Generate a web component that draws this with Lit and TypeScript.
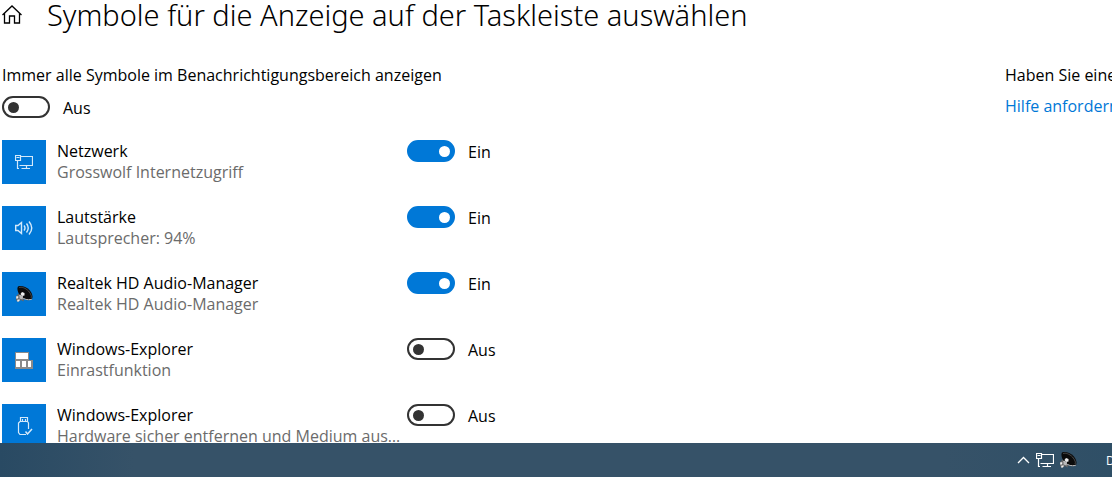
import { LitElement, html, svg, css } from "lit";
import { customElement, property, state } from "lit/decorators.js";

type IconName = "network" | "volume" | "speaker" | "keys" | "usb";

interface TrayItem {
  icon: IconName;
  name: string;
  detail: string;
  on: boolean;
}

const icons = {
  network: svg`
    <g fill="none" stroke="currentColor" stroke-width="1.2">
      <path d="M5.500 3.500H17.500V12.500H4.500M11.500 12.500V15.500M6.500 15.500H15"/>
      <path d="M.5 2.500H5.500V7.500H.5ZM1.500 4.500H4.500M2.500 7.500V15.500H4"/>
    </g>`,
  volume: svg`
    <g fill="none" stroke="currentColor" stroke-width="1.4">
      <path d="M.7 6.500H3L6.500 3.500V14.500L3 11.500H.7Z"/>
      <path d="M9 6.500Q11 9 9 11.500M11.500 4.500Q15 9 11.500 13.500M14 2.500Q19.500 9 14 15.500"/>
    </g>`,
  speaker: svg`
    <path d="M1 11.500L3.500 8.500L9 13.500L8.500 16.500L6 15L3 17L1 15Z" fill="#666"/>
    <path d="M3 1.500C6 .3 11 1.500 14.500 5C17.500 8.500 18.500 12.500 16.500 14.500C13 16.500 8 14.500 5 10.500C2.500 7 1.800 3.500 3 1.500Z" fill="#0b0b0b"/>
    <path d="M4 2.500C6.500 1.500 10.500 3 13.500 6C16 9 17 11.500 16 13" fill="none" stroke="#555" stroke-width=".8"/>
    <path d="M4.500 10C7.500 14 12.500 15.700 16.800 14.200" fill="none" stroke="#ccc" stroke-width="1"/>
    <path d="M7 7L9.500 8L9.500 10.500L7 11L5.500 9Z" fill="#eee"/>
    <path d="M4.500 9.500L8 11L7.500 14.500L4.500 13.500Z" fill="#bbb"/>
    <path d="M1.500 11L3.500 11.500L3 13.500L1 13.500ZM2.500 14.500H5L4 16.500H2Z" fill="#eee"/>`,
  keys: svg`
    <path d="M0 1H14V9H18V18H0Z" fill="#8a8a8a"/>
    <path d="M1 2H13V8H1ZM1 10H5V16H1ZM7 10H11V16H7ZM13 10H16V16H13Z" fill="#fff"/>`,
  usb: svg`
    <g fill="none" stroke="currentColor" stroke-width="1.2">
      <path d="M5.500 4.500V.5H12.500V4.500M7.500 2V4M10.500 2V4"/>
      <path d="M13.500 12V6L12.500 4.500H5L3.500 6V15.500L5 17.500H11"/>
      <path d="M10.500 14.500L12.500 17L17 12" stroke-width="1.5"/>
    </g>`,
};

@customElement("toggle-switch")
export class ToggleSwitch extends LitElement {
  @property({ type: Boolean }) on = false;
  @property() name = "";

  static styles = css`
    :host {
      display: block;
    }
    .toggle {
      display: flex;
      align-items: center;
      gap: 13px;
      height: 24px;
    }
    .input {
      appearance: none;
      box-sizing: border-box;
      display: flex;
      align-items: center;
      width: 48px;
      height: 22px;
      margin: 0 0 2px;
      padding: 0 4px;
      border: 2px solid #333;
      border-radius: 11px;
      background: #fff;
    }
    .input::before {
      content: "";
      width: 11px;
      height: 11px;
      border-radius: 50%;
      background: #333;
    }
    .input:checked {
      justify-content: flex-end;
      padding: 0 3px;
      border-color: #0078d7;
      background: #0078d7;
    }
    .input:checked::before {
      background: #fff;
    }
  `;

  render() {
    return html`<label class="toggle">
      <input
        class="input"
        type="checkbox"
        role="switch"
        aria-label=${this.name}
        .checked=${this.on}
        @change=${(e: Event) => (this.on = (e.target as HTMLInputElement).checked)}
      />
      <span>${this.on ? "Ein" : "Aus"}</span>
    </label>`;
  }
}

@customElement("app-root")
export class AppRoot extends LitElement {
  @state() private items: TrayItem[] = [
    { icon: "network", name: "Netzwerk", detail: "Grosswolf Internetzugriff", on: true },
    { icon: "volume", name: "Lautstärke", detail: "Lautsprecher: 94%", on: true },
    { icon: "speaker", name: "Realtek HD Audio-Manager", detail: "Realtek HD Audio-Manager", on: true },
    { icon: "keys", name: "Windows-Explorer", detail: "Einrastfunktion", on: false },
    {
      icon: "usb",
      name: "Windows-Explorer",
      detail: "Hardware sicher entfernen und Medium auswerfen",
      on: false,
    },
  ];

  static styles = css`
    :host {
      display: flex;
      flex-direction: column;
      height: 100vh;
      overflow: hidden;
      background: #fff;
      color: #000;
      font: 16px/21px "Open Sans", "Noto Sans", sans-serif;
    }
    .page {
      flex: 1;
      min-height: 0;
      overflow: hidden;
      padding-left: 2px;
    }
    .header {
      display: flex;
      align-items: center;
      gap: 25px;
      height: 30px;
    }
    .home {
      width: 20px;
      height: 20px;
      flex: none;
    }
    .title {
      margin: 0;
      font-family: "Noto Sans", "Open Sans", sans-serif;
      font-size: 29px;
      line-height: 28px;
      font-weight: 300;
      white-space: nowrap;
    }
    .columns {
      display: flex;
      justify-content: space-between;
      padding-top: 35px;
    }
    .caption {
      margin: 0 0 10px;
    }
    .list {
      display: grid;
      gap: 22px;
      margin: 20px 0 0;
      padding: 0;
      list-style: none;
    }
    .item {
      display: grid;
      grid-template-columns: 44px 361px auto;
      height: 44px;
    }
    .tile {
      display: grid;
      place-items: center;
      background: #0078d7;
      color: #d4e9fa;
    }
    .icon {
      width: 18px;
      height: 18px;
    }
    .text {
      min-width: 0;
      padding: 1px 4px 0 11px;
    }
    .name,
    .detail {
      overflow: hidden;
      white-space: nowrap;
      text-overflow: ellipsis;
    }
    .detail {
      color: #6b6b6b;
    }
    .help {
      width: 107px;
      flex: none;
      overflow: hidden;
      white-space: nowrap;
    }
    .question {
      margin: 0 0 10px;
    }
    .link {
      color: #0078d7;
      text-decoration: none;
    }
    .taskbar {
      flex: none;
      display: flex;
      align-items: center;
      justify-content: flex-end;
      gap: 5px;
      height: 34px;
      overflow: hidden;
      background: linear-gradient(90deg, #294a63, #365268 12%, #365268 85%, #2f4f66);
      color: #fff;
    }
    .tray {
      display: block;
      padding: 0;
      border: 0;
      background: none;
      color: inherit;
      height: 18px;
    }
    .chevron {
      width: 14px;
      height: 18px;
    }
    .lang {
      width: 6px;
      margin-left: 24px;
      overflow: hidden;
      font-size: 12px;
    }
  `;

  private icon(name: IconName) {
    return html`<svg class="icon" viewBox="0 0 18 18" aria-hidden="true">${icons[name]}</svg>`;
  }

  render() {
    return html`
      <main class="page">
        <header class="header">
          <svg class="home" viewBox="0 0 20 20" aria-hidden="true">
            <path
              d="M.5 10L10 1L19.500 10M2.500 8.500V18H7.500V11H12.500V18H17.500V8.500"
              fill="none"
              stroke="#000"
              stroke-width="1.300"
            />
          </svg>
          <h1 class="title">Symbole für die Anzeige auf der Taskleiste auswählen</h1>
        </header>
        <div class="columns">
          <section>
            <p class="caption">Immer alle Symbole im Benachrichtigungsbereich anzeigen</p>
            <toggle-switch name="Immer alle Symbole im Benachrichtigungsbereich anzeigen"></toggle-switch>
            <ul class="list">
              ${this.items.map(
                (item) => html`<li class="item">
                  <div class="tile">${this.icon(item.icon)}</div>
                  <div class="text">
                    <div class="name">${item.name}</div>
                    <div class="detail">${item.detail}</div>
                  </div>
                  <toggle-switch .name=${item.name} .on=${item.on}></toggle-switch>
                </li>`
              )}
            </ul>
          </section>
          <aside class="help">
            <p class="question">Haben Sie eine Frage?</p>
            <a class="link" href="#hilfe">Hilfe anfordern</a>
          </aside>
        </div>
      </main>
      <footer class="taskbar">
        <button class="tray" aria-label="Ausgeblendete Symbole einblenden">
          <svg class="chevron" viewBox="0 0 14 18" aria-hidden="true">
            <path d="M1 12L6.500 6.500L12 12" fill="none" stroke="currentColor" stroke-width="1.300" />
          </svg>
        </button>
        <button class="tray" aria-label="Netzwerk">${this.icon("network")}</button>
        <button class="tray" aria-label="Realtek HD Audio-Manager">${this.icon("speaker")}</button>
        <span class="lang">DEU</span>
      </footer>
    `;
  }
}
